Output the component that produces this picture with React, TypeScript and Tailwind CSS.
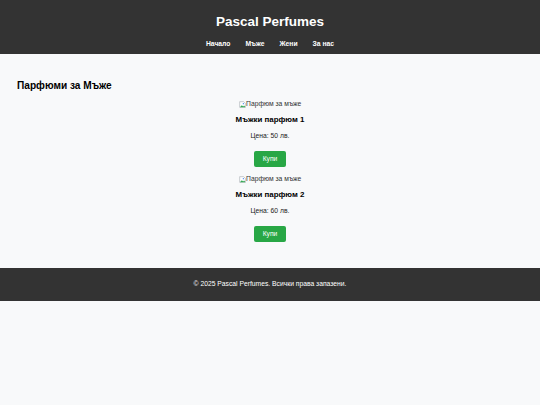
import React from "react";

function BrokenImg() {
  return (
    <svg width="7" height="7" viewBox="0 0 16 16" className="inline-block mr-[0.5px]" aria-hidden>
      <path d="M1.5 1.5h9l4 4v9h-13z" fill="#fff" stroke="#9aa0a6" strokeWidth="1.2" />
      <path d="M2.5 13.5l4-4 3 3 2-2 3 3v1h-12z" fill="#34a853" />
      <circle cx="10" cy="6" r="1.5" fill="#4285f4" />
    </svg>
  );
}

function Product({ name, price }: { name: string; price: string }) {
  return (
    <div className="flex flex-col items-center">
      <div className="h-[8px] leading-[8px] text-[6.75px] text-[#333] flex items-center">
        <BrokenImg />
        <span>Парфюм за мъже</span>
      </div>
      <h3 className="mt-[7px] h-[10px] leading-[10px] text-[7.9px] font-bold text-black">{name}</h3>
      <p className="mt-[7px] h-[8px] leading-[8px] text-[6.75px] text-[#222]">Цена: {price}</p>
      <button className="mt-[10.5px] w-[32px] h-[16px] rounded-[2px] bg-[#28a745] text-white text-[6.75px] leading-[16px] text-center">
        Купи
      </button>
    </div>
  );
}

export default function App() {
  return (
    <div
      className="min-h-[405px] bg-[#f8f9fa]"
      style={{ fontFamily: '"Liberation Sans", Arial, sans-serif' }}
    >
      <header className="h-[54px] bg-[#333] flex flex-col items-center">
        <h1 className="mt-[14px] h-[16px] leading-[16px] text-[13.5px] font-bold text-white">
          Pascal Perfumes
        </h1>
        <nav className="mt-[10px] h-[8px] flex gap-[15px] text-[6.75px] leading-[8px] font-bold text-white">
          <span>Начало</span>
          <span>Мъже</span>
          <span>Жени</span>
          <span>За нас</span>
        </nav>
      </header>
      <main className="pt-[26px] px-[17px]">
        <h2 className="h-[12px] leading-[12px] text-[10.125px] font-bold text-black">
          Парфюми за Мъже
        </h2>
        <div className="mt-[8px] flex flex-col gap-[8.5px]">
          <Product name="Мъжки парфюм 1" price="50 лв." />
          <Product name="Мъжки парфюм 2" price="60 лв." />
        </div>
      </main>
      <footer className="mt-[26px] h-[33px] bg-[#333] flex items-center justify-center text-white text-[6.75px]">
        © 2025 Pascal Perfumes. Всички права запазени.
      </footer>
    </div>
  );
}
